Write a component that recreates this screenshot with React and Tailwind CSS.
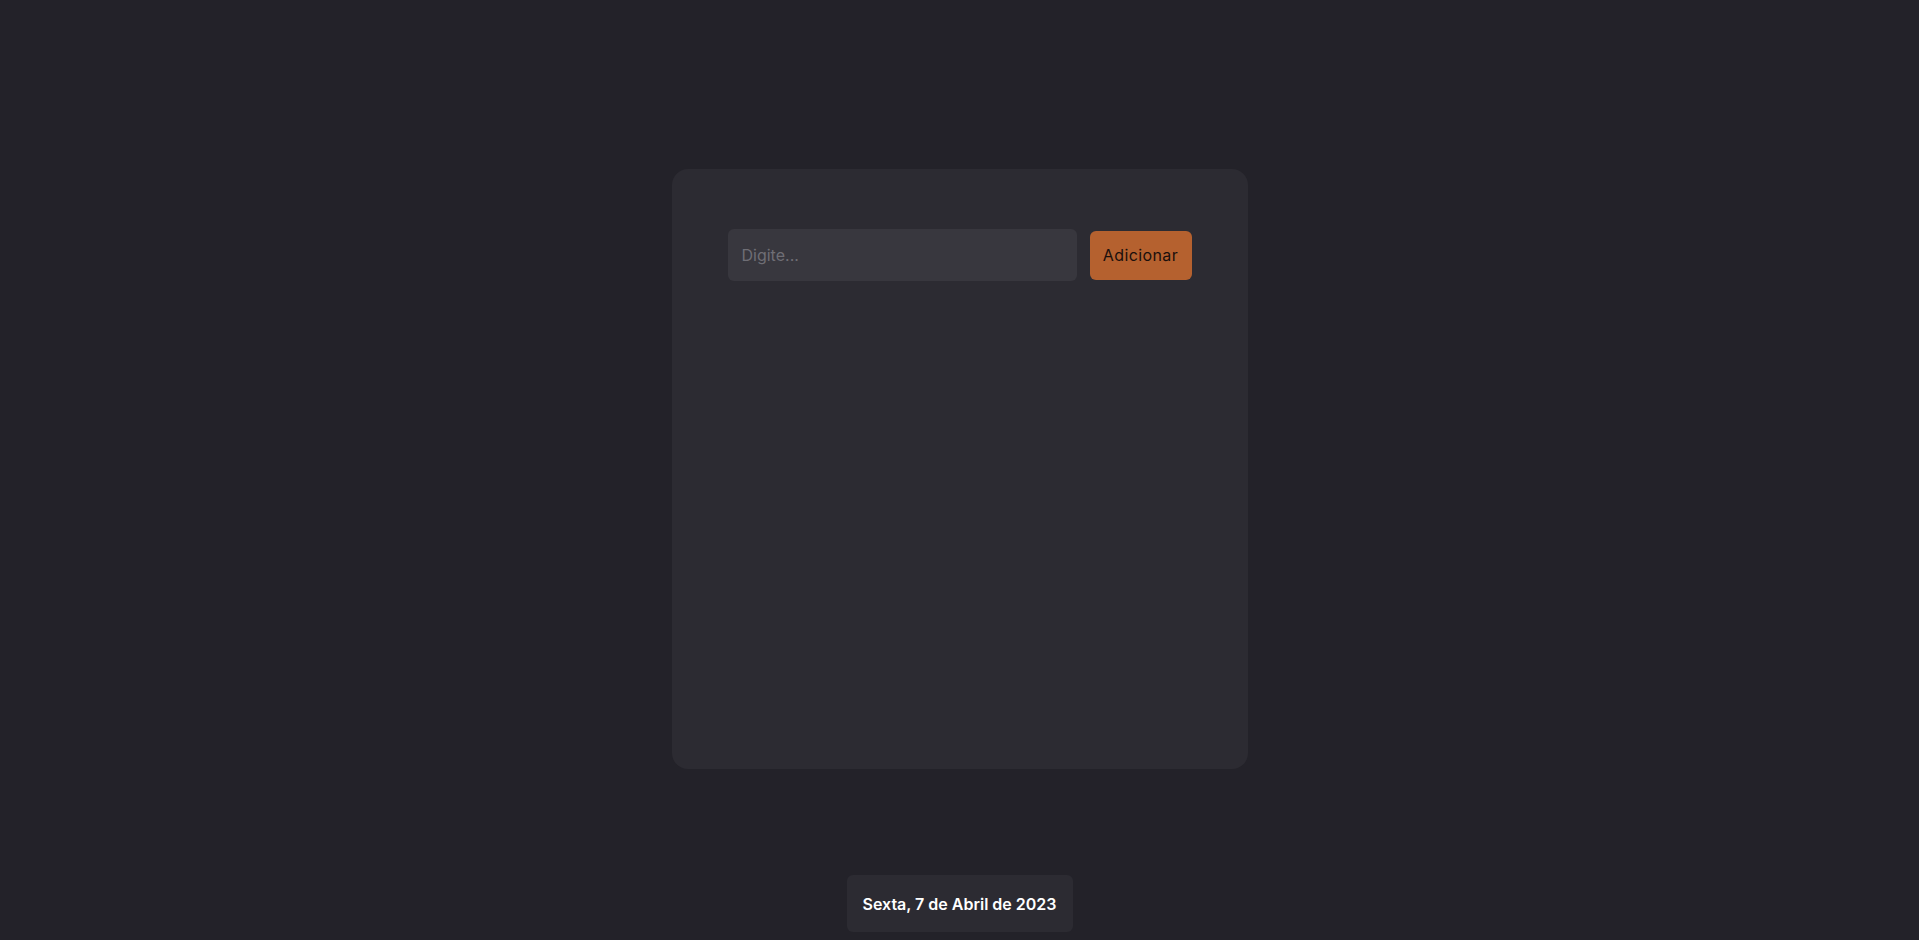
export default function App() {
  return (
    <div
      className="flex h-[940px] w-full flex-col items-center overflow-hidden bg-[#232229] pt-[169px]"
      style={{ fontFamily: '"Inter", "Liberation Sans", sans-serif' }}
    >
      <div className="flex h-[600px] w-[576px] flex-col rounded-2xl bg-[#2c2b32] px-[56px] pt-[60px]">
        <div className="flex items-center gap-[13px]">
          <input
            type="text"
            placeholder="Digite..."
            className="h-[52px] w-[349px] rounded-md bg-[#38373e] px-[14px] text-[16px] text-white outline-none placeholder:text-[#6f6e75]"
          />
          <button className="h-[49px] w-[102px] rounded-md bg-[#b5612f] text-[16px] tracking-[0.4px] text-[#1a0f0c]">
            Adicionar
          </button>
        </div>
      </div>
      <div className="mt-[106px] flex h-[57px] w-[226px] items-center justify-center rounded-md bg-[#2c2b32] text-[16px] font-semibold text-white">
        Sexta, 7 de Abril de 2023
      </div>
    </div>
  );
}
